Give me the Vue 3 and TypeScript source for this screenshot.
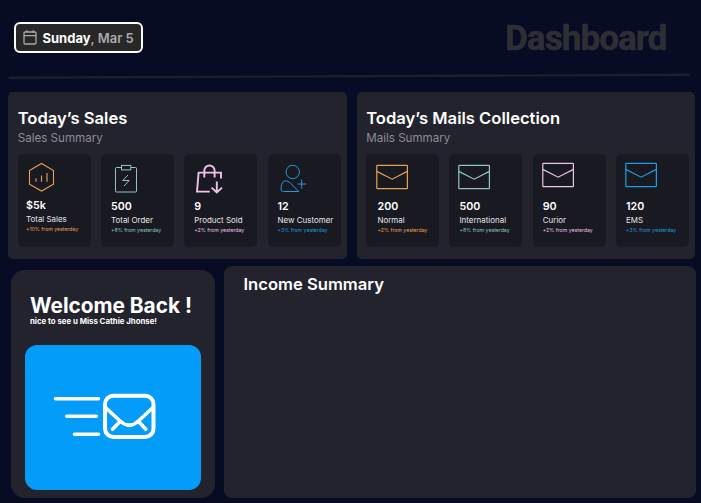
<script setup lang="ts">
type Icon = 'chart' | 'order' | 'bag' | 'user' | 'mail'

interface Tile {
  icon: Icon
  tone: string
  value: string
  label: string
  note: string
  shift?: string
}

interface Panel {
  title: string
  subtitle: string
  kind: string
  tiles: Tile[]
}

const panels: Panel[] = [
  {
    title: 'Today’s Sales',
    subtitle: 'Sales Summary',
    kind: 'sales',
    tiles: [
      { icon: 'chart', tone: 'amber', value: '$5k', label: 'Total Sales', note: '+10% from yesterday', shift: 'tight' },
      { icon: 'order', tone: 'teal', value: '500', label: 'Total Order', note: '+8% from yesterday' },
      { icon: 'bag', tone: 'pink', value: '9', label: 'Product Sold', note: '+2% from yesterday' },
      { icon: 'user', tone: 'blue', value: '12', label: 'New Customer', note: '+3% from yesterday' },
    ],
  },
  {
    title: 'Today’s Mails Collection',
    subtitle: 'Mails Summary',
    kind: 'mails',
    tiles: [
      { icon: 'mail', tone: 'amber', value: '200', label: 'Normal', note: '+2% from yesterday', shift: 'loose' },
      { icon: 'mail', tone: 'teal', value: '500', label: 'International', note: '+8% from yesterday' },
      { icon: 'mail', tone: 'pink', value: '90', label: 'Curior', note: '+2% from yesterday', shift: 'raised' },
      { icon: 'mail', tone: 'blue', value: '120', label: 'EMS', note: '+3% from yesterday', shift: 'raised' },
    ],
  },
]
</script>

<template>
  <main class="page">
    <header class="header">
      <div class="date">
        <svg class="calendar" viewBox="0 0 14 16" fill="none" stroke="currentColor">
          <rect x="1" y="2" width="12" height="12" rx="1" stroke-width="1.3" />
          <path d="M1 5.7H13M3.8 .2V2.5M10.2 .2V2.5" stroke-width="1.3" />
        </svg>
        <span><b>Sunday</b>, Mar 5</span>
      </div>
      <h1>Dashboard</h1>
    </header>
    <svg class="divider" viewBox="0 0 701 10" fill="none">
      <path d="M9.5 5.7 L689.5 2.8" stroke="#1e1f2d" stroke-width="2.4" stroke-linecap="round" />
    </svg>

    <div class="panels">
      <section v-for="panel in panels" :key="panel.title" class="panel" :class="panel.kind">
        <h2>{{ panel.title }}</h2>
        <p class="subtitle">{{ panel.subtitle }}</p>
        <div class="tiles">
          <article v-for="tile in panel.tiles" :key="tile.label" class="tile" :class="[tile.tone, tile.shift]">
            <div class="icon">
              <svg v-if="tile.icon === 'chart'" class="chart" width="32" height="34" fill="none" stroke="currentColor">
                <path d="M15.5 3.5L27.5 10.5V24.2L15.5 31L3.5 24.2V10.5Z" stroke-width="1.1" />
                <path d="M10 18.3V21.8M15.5 15.5V21.8M21 13V21.8" stroke-width="1.1" />
              </svg>
              <svg v-else-if="tile.icon === 'order'" width="32" height="34" fill="none" stroke="currentColor">
                <path d="M10.5 6.5H5.5Q4.5 6.5 4.5 7.5V30Q4.5 31 5.5 31H24.5Q25.5 31 25.5 30V7.5Q25.5 6.5 24.5 6.5H20" />
                <rect x="10.5" y="4.4" width="9.3" height="4.5" />
                <path d="M17 14L11.7 19.5H18.2L13 25" />
              </svg>
              <svg v-else-if="tile.icon === 'bag'" width="32" height="34" fill="none" stroke="currentColor" stroke-width="1.9">
                <path d="M15.8 30.6H3L4.6 11.6H27V17.6M10.3 16.6V9.6A5.1 5.1 0 0 1 20.6 9.6V16.6" />
                <path d="M22.8 20.5V31.1M17.6 26.6L22.8 31.4L28 26.6" />
              </svg>
              <svg v-else-if="tile.icon === 'user'" width="32" height="34" fill="none" stroke="currentColor" stroke-width="1">
                <circle cx="14.7" cy="11" r="6.7" />
                <path d="M5.5 20.3C3.8 22.5 3 24.8 3 28Q3 30.5 5.5 30.5H20.8L12 21.7Q8.5 18.5 5.5 20.3ZM19.5 23H28M23.7 18.5V27.5" />
              </svg>
              <svg v-else class="mail" width="34" height="34" fill="none" stroke="currentColor" stroke-width="1.2">
                <rect x="-.2" y="4.4" width="30.6" height="23.3" rx=".6" />
                <path d="M-.2 10.4L15.1 18.2L30.4 10.4" />
              </svg>
            </div>
            <strong>{{ tile.value }}</strong>
            <span class="label">{{ tile.label }}</span>
            <span class="note">{{ tile.note }}</span>
          </article>
        </div>
      </section>
    </div>

    <div class="lower">
      <section class="welcome">
        <h2>Welcome Back !</h2>
        <p>nice to see u Miss Cathie Jhonse!</p>
        <div class="banner">
          <svg width="176" height="145" fill="none" stroke="#fff" stroke-width="4">
            <path d="M30.5 53.7H73.5M41.8 71.3H71.3M49.5 89.2H73.5" stroke-width="3.6" stroke-linecap="round" />
            <rect x="80" y="50.7" width="48.5" height="41.3" rx="8.5" />
            <path d="M80.5 62.5L95 76Q104.3 84.5 113.5 76L128 62.5M95 76.5L87.5 84.3M113.5 76.5L120.8 84.3" stroke-width="3.6" stroke-linecap="round" />
          </svg>
        </div>
      </section>
      <section class="income">
        <h2>Income Summary</h2>
      </section>
    </div>
  </main>
</template>

<style>
body {
  margin: 0;
  background: #070b24;
}
</style>

<style scoped>
.page {
  box-sizing: border-box;
  width: 701px;
  height: 503px;
  overflow: hidden;
  background: #070b24;
  color: #fff;
  font-family: Inter, sans-serif;
}
h1, h2, p {
  margin: 0;
}
.header {
  box-sizing: border-box;
  display: flex;
  justify-content: space-between;
  height: 72px;
  padding: 22px 34.5px 0 14px;
}
.date {
  box-sizing: border-box;
  display: flex;
  align-items: center;
  gap: 6px;
  width: 129.3px;
  height: 31.3px;
  padding-left: 6.5px;
  border: 2px solid #fff;
  border-radius: 6px;
  background: #272727;
  color: #aaa;
  font-size: 13px;
  font-weight: 600;
  white-space: nowrap;
}
.date b {
  color: #fff;
  font-weight: 700;
}
.calendar {
  width: 14px;
  height: 16px;
}
h1 {
  font: 700 34.8px/32px Roboto, sans-serif;
  letter-spacing: -0.8px;
  color: #2e2f34;
  -webkit-text-stroke: 0.7px #2e2f34;
  filter: blur(0.7px);
}
.divider {
  display: block;
  width: 701px;
  height: 10px;
  filter: blur(0.4px);
}
.panels {
  display: flex;
  gap: 10px;
  padding: 10px 0 0 8.3px;
}
.panel {
  box-sizing: border-box;
  width: 338.5px;
  height: 167.3px;
  padding: 16px 0 0 9.4px;
  border-radius: 5px;
  background: #23232e;
}
.panel h2, .income h2 {
  font-size: 16.6px;
  line-height: 20px;
  font-weight: 600;
}
.subtitle {
  margin-top: 3px;
  color: #8d8d90;
  font-size: 11.6px;
  line-height: 14px;
}
.tiles {
  display: flex;
  gap: 10.3px;
  margin-top: 8.6px;
}
.tile {
  box-sizing: border-box;
  display: flex;
  flex-direction: column;
  width: 73px;
  height: 93.4px;
  padding: 7.4px 0 0 10px;
  border-radius: 5px;
  background: #191922;
  white-space: nowrap;
}
.tight {
  padding-left: 8.3px;
  padding-top: 6.4px;
}
.loose {
  padding-left: 11.3px;
}
.icon {
  height: 39px;
}
.icon svg {
  display: block;
  overflow: visible;
}
.raised .mail {
  margin-top: -2px;
}
.amber { color: #e8a24c; }
.teal { color: #8fc7bd; }
.pink { color: #ebc3e5; }
.blue { color: #209bdd; }
.tile strong {
  color: #fff;
  font-size: 10.7px;
  line-height: 14px;
  font-weight: 600;
}
.label {
  color: #e6e6e8;
  font-size: 7.95px;
  line-height: 12px;
}
.note {
  font-size: 5.2px;
  line-height: 9px;
}
.lower {
  display: flex;
  align-items: flex-end;
  gap: 9px;
  margin-top: 6.5px;
  padding-left: 11px;
}
.welcome {
  box-sizing: border-box;
  width: 204px;
  height: 228px;
  padding: 25px 14px 0;
  border-radius: 14px;
  background: #23232e;
}
.welcome h2 {
  padding-left: 5px;
  font-size: 20.8px;
  line-height: 22px;
  font-weight: 700;
  white-space: nowrap;
}
.welcome p {
  padding-left: 5px;
  font-size: 7.8px;
  line-height: 8px;
  font-weight: 700;
}
.banner {
  height: 145px;
  margin-top: 19.8px;
  border-radius: 12px;
  background: #039df9;
  filter: blur(0.5px);
}
.income {
  box-sizing: border-box;
  width: 471.5px;
  height: 232px;
  padding: 8px 19.5px;
  border-radius: 8px;
  background: #23232e;
}
</style>
